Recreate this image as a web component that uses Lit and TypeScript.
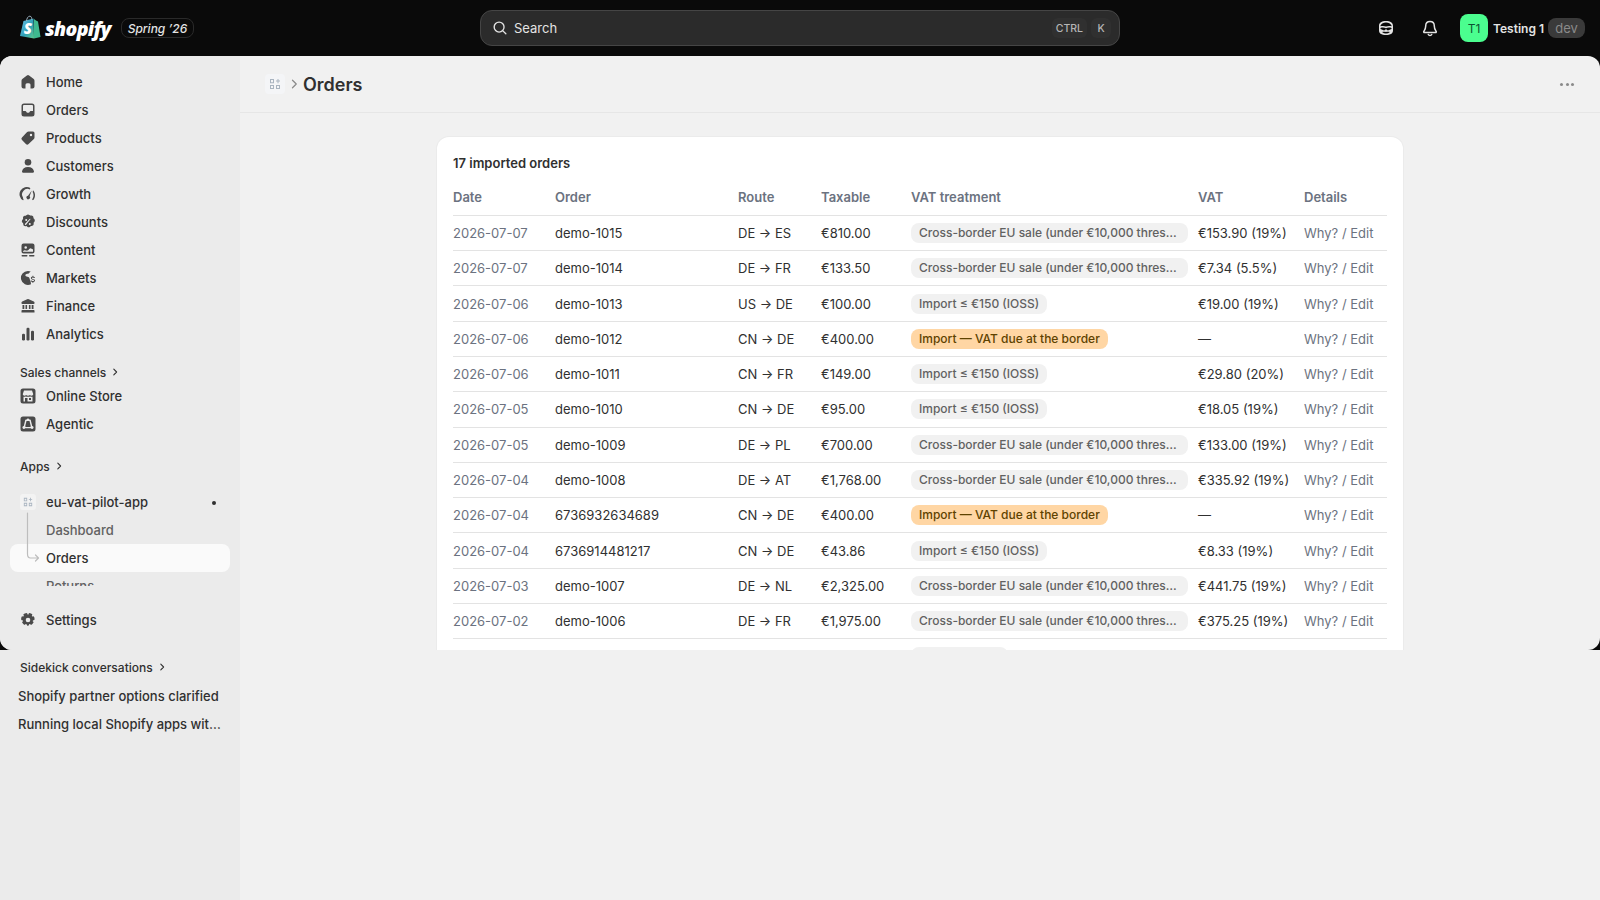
import { LitElement, html, css, svg } from "lit";
import { customElement } from "lit/decorators.js";

const ic = (body: unknown) => html`<svg class="ic" viewBox="0 0 20 20" fill="currentColor" fill-rule="evenodd">${body}</svg>`;

const ICONS: Record<string, unknown> = {
  home: svg`<path d="M8.9 3.4a1.8 1.8 0 0 1 2.2 0l4.6 3.7c.5.4.8 1 .8 1.6v5.8a2 2 0 0 1-2 2h-2v-3.7a1.5 1.5 0 0 0-1.5-1.5H9a1.5 1.5 0 0 0-1.5 1.5v3.7h-2a2 2 0 0 1-2-2V8.700c0-.6.3-1.200.8-1.600z"/>`,
  orders: svg`<path d="M6 3.500h8A2.500 2.500 0 0 1 16.500 6v8a2.500 2.500 0 0 1-2.500 2.500H6A2.500 2.500 0 0 1 3.500 14V6A2.500 2.500 0 0 1 6 3.500zM6 5a1 1 0 0 0-1 1v5h2.300c.5 0 .9.300 1 .7.200.6.900 1 1.700 1s1.500-.4 1.700-1c.1-.4.5-.7 1-.7H15V6a1 1 0 0 0-1-1z"/>`,
  products: svg`<path d="M10.600 3.500h4.400A1.500 1.500 0 0 1 16.500 5v4.400c0 .6-.2 1.100-.6 1.500l-5.300 5.100a1.900 1.900 0 0 1-2.700 0L4 12.100a1.900 1.900 0 0 1 0-2.700l5.100-5.300c.4-.4.9-.6 1.500-.6zM13 8.200a1.200 1.200 0 1 0 0-2.400 1.200 1.200 0 0 0 0 2.400z"/>`,
  customers: svg`<circle cx="10" cy="6.300" r="3.300"/><path d="M10 11c-3.500 0-5.700 1.800-6 4.600-.1.700.4 1.200 1 1.200h10c.6 0 1.100-.5 1-1.200-.3-2.800-2.500-4.600-6-4.600z"/>`,
  growth: svg`<path d="M5 16.300A7 7 0 0 1 12.400 4l-.6 1.400A5.500 5.500 0 0 0 5 13.500c0 .9.300 1.800.7 2.500zM15 6.300c1.300 1.300 2 3 2 4.700 0 1.900-.5 3.900-2 5.300l-1-1c1-1 1.500-2.700 1.500-4.300 0-1-.3-2-.8-2.900zM13.800 6.600l-2.200 5.700a1.800 1.800 0 1 1-1.600-.6z"/>`,
  discounts: svg`<path d="M8.600 2.900c.8-.7 2-.7 2.800 0l.8.7 1.100-.1c1-.1 2 .7 2.100 1.700l.1 1.100.8.800c.7.800.7 2 0 2.800l-.7.800.1 1.100c.1 1-.7 2-1.700 2.100l-1.100.1-.8.800c-.8.700-2 .7-2.800 0l-.8-.7-1.100.1c-1 .1-2-.7-2.100-1.700l-.1-1.100-.8-.8c-.7-.8-.7-2 0-2.800l.7-.8-.1-1.100c-.1-1 .7-2 1.700-2.100l1.100-.1zM12.600 7.100a.7.700 0 0 0-1-.1l-4.500 4.700a.7.700 0 0 0 1 1zM8.200 8.900a1 1 0 1 0 0-2 1 1 0 0 0 0 2zM11.800 13a1 1 0 1 0 0-2 1 1 0 0 0 0 2z"/>`,
  content: svg`<path d="M5.500 3.500h9a2 2 0 0 1 2 2v6a2 2 0 0 1-2 2h-9a2 2 0 0 1-2-2v-6a2 2 0 0 1 2-2zM9 7.500a1.300 1.300 0 1 0-2.600 0 1.300 1.300 0 0 0 2.600 0zM5 11.800h10v-2.200c-1-.5-2.200-1.500-3-1.200-1.200.4-1.500 2-2.500 2.200-1.500.3-3-1.300-4.500.6z"/><rect x="3.500" y="15" width="6" height="1.500" rx=".7"/><rect x="11" y="15" width="5.500" height="1.500" rx=".7"/>`,
  markets: svg`<path d="M10 3c1 0 1.900.2 2.700.6-.9.600-1.500 1.200-2 2-.8.300-2.200.3-3 1-.6.500-.3 1.300.2 1.600 1 .6 2.100.3 3 1 .5.400.5 1 .8 1.800.2.700.5 1.700 1 2.800L13 16.300A7 7 0 1 1 10 3z"/><path d="M15.300 7.700v.9c.9.100 1.500.600 1.600 1.400h-1.100c-.1-.3-.4-.5-.9-.5-.6 0-1 .3-1 .7s.3.600 1 .7c1.400.2 2.100.7 2.100 1.700 0 .8-.6 1.400-1.700 1.500v.9h-.8v-.9c-1-.1-1.700-.7-1.800-1.600h1.100c.1.400.5.600 1.100.6s1.100-.2 1.100-.7c0-.4-.3-.6-1.100-.7-1.400-.2-2-.8-2-1.600 0-.8.600-1.400 1.600-1.500v-.9z"/>`,
  finance: svg`<path d="M9.200 3.200a2 2 0 0 1 1.600 0l5 2.200c.5.200.7.600.7 1v.900c0 .4-.3.700-.7.700H4.200a.7.700 0 0 1-.7-.7v-.9c0-.4.200-.8.700-1z"/><path d="M4.500 9h1.800v4H4.500zM7.500 9h1.600v4H7.500zM10.900 9h1.600v4h-1.600zM13.700 9h1.800v4h-1.800z"/><path d="M4.500 14h11c.6 0 1 .4 1 1v1.500h-13V15c0-.6.400-1 1-1z"/>`,
  analytics: svg`<rect x="4" y="9.800" width="3" height="6.700" rx="1.200"/><rect x="8.500" y="3.800" width="3" height="12.700" rx="1.200"/><rect x="13" y="6.800" width="3" height="9.700" rx="1.200"/>`,
  store: svg`<path d="M5 2.500h10A2.500 2.500 0 0 1 17.500 5v10a2.500 2.500 0 0 1-2.500 2.500H5A2.500 2.500 0 0 1 2.500 15V5A2.500 2.500 0 0 1 5 2.500zM6 4.500 4.800 8c0 1 .8 1.700 1.700 1.700.7 0 1.200-.3 1.600-.8.400.5 1.100.8 1.900.8s1.500-.3 1.900-.8c.4.500.9.800 1.600.8.900 0 1.700-.7 1.700-1.700L14 4.500zM5.500 10.800v4.700h9v-4.700c-.9 0-1.600-.1-2.200-.4-.7.300-1.500.4-2.300.4s-1.600-.1-2.300-.4c-.6.300-1.300.4-2.200.4zM7 12h2.500v3.500H7zM11 12h2v2h-2z"/>`,
  agentic: svg`<path d="M5 2.500h10A2.500 2.500 0 0 1 17.500 5v10a2.500 2.500 0 0 1-2.500 2.500H5A2.500 2.500 0 0 1 2.500 15V5A2.500 2.500 0 0 1 5 2.500zM10 4.500a1.500 1.500 0 0 0-1.400 1L7.300 5.700 5.800 12a1.500 1.500 0 1 0 1.400 2.300h5.600a1.500 1.500 0 1 0 1.400-2.300l-1.500-6.300-1.300-.2a1.500 1.500 0 0 0-1.400-1zM8.500 7h3l1.300 5.300-.5.800H7.700l-.5-.8z"/>`,
  settings: svg`<path d="M8.400 3c.4 0 .8.200.9.600l.2.800a5.600 5.600 0 0 1 1 0l.200-.8c.1-.4.500-.6.900-.6.900.2 1.700.5 2.400 1 .3.200.4.700.2 1.100l-.4.600c.2.300.4.500.6.800l.8-.1c.4-.1.800.1 1 .5.300.8.400 1.700.3 2.500 0 .4-.3.800-.7.800l-.8.100-.3.900.6.600c.3.300.3.700.1 1-.5.700-1.100 1.400-1.800 1.900-.3.200-.8.200-1.100-.1l-.5-.6-.9.300-.2.800c-.1.400-.4.700-.8.700H9.600c-.4 0-.7-.3-.8-.7l-.2-.8-.9-.3-.5.600c-.3.300-.8.300-1.100.1-.7-.5-1.300-1.200-1.800-1.900-.2-.3-.2-.7.100-1l.6-.6-.3-.9-.8-.1c-.4 0-.7-.4-.7-.8-.1-.8 0-1.700.3-2.500.2-.4.600-.6 1-.5l.8.100c.2-.3.400-.5.600-.8l-.4-.6c-.2-.4-.1-.9.200-1.100.7-.5 1.500-.8 2.700-1zM10 12.300a2.300 2.300 0 1 0 0-4.600 2.300 2.300 0 0 0 0 4.600z"/>`,
};

const CROSS = "Cross-border EU sale (under €10,000 threshold)";
const IOSS = "Import ≤ €150 (IOSS)";
const BORDER = "Import — VAT due at the border";
const DOM = "Domestic sale";

const ROWS: [string, string, string, string, string, string][] = [
  ["2026-07-07", "demo-1015", "DE → ES", "€810.00", CROSS, "€153.90 (19%)"],
  ["2026-07-07", "demo-1014", "DE → FR", "€133.50", CROSS, "€7.34 (5.5%)"],
  ["2026-07-06", "demo-1013", "US → DE", "€100.00", IOSS, "€19.00 (19%)"],
  ["2026-07-06", "demo-1012", "CN → DE", "€400.00", BORDER, "—"],
  ["2026-07-06", "demo-1011", "CN → FR", "€149.00", IOSS, "€29.80 (20%)"],
  ["2026-07-05", "demo-1010", "CN → DE", "€95.00", IOSS, "€18.05 (19%)"],
  ["2026-07-05", "demo-1009", "DE → PL", "€700.00", CROSS, "€133.00 (19%)"],
  ["2026-07-04", "demo-1008", "DE → AT", "€1,768.00", CROSS, "€335.92 (19%)"],
  ["2026-07-04", "6736932634689", "CN → DE", "€400.00", BORDER, "—"],
  ["2026-07-04", "6736914481217", "CN → DE", "€43.86", IOSS, "€8.33 (19%)"],
  ["2026-07-03", "demo-1007", "DE → NL", "€2,325.00", CROSS, "€441.75 (19%)"],
  ["2026-07-02", "demo-1006", "DE → FR", "€1,975.00", CROSS, "€375.25 (19%)"],
  ["2026-07-02", "demo-1005", "DE → DE", "€320.00", DOM, "€60.80 (19%)"],
  ["2026-07-01", "demo-1004", "DE → DE", "€210.00", DOM, "€39.90 (19%)"],
  ["2026-07-01", "demo-1003", "DE → IT", "€540.00", CROSS, "€102.60 (19%)"],
  ["2026-06-30", "demo-1002", "DE → FR", "€260.00", CROSS, "€49.40 (19%)"],
  ["2026-06-30", "demo-1001", "DE → DE", "€180.00", DOM, "€34.20 (19%)"],
];

const NAV: [string, string][] = [
  ["home", "Home"], ["orders", "Orders"], ["products", "Products"], ["customers", "Customers"], ["growth", "Growth"],
  ["discounts", "Discounts"], ["content", "Content"], ["markets", "Markets"], ["finance", "Finance"], ["analytics", "Analytics"],
];

const chev = html`<svg class="chev" viewBox="0 0 8 8" fill="none" stroke="currentColor" stroke-width="1.100" stroke-linecap="round" stroke-linejoin="round"><path d="M2.800 1.200 5.600 4 2.800 6.800"/></svg>`;
const appIcon = html`<svg class="appglyph" viewBox="0 0 12 12" fill="#a9b4c0"><path fill-rule="evenodd" d="M1 1h4v4.200H1zm1 1v2.200h2V2zM1 7h4v4H1zm1 1v2h2V8zM7 7h4v4H7zm1 1v2h2V8z"/><path d="M8.500 1h1v1.600H11v1H9.500v1.600h-1V3.600H7v-1h1.500z"/></svg>`;

@customElement("app-root")
export class AppRoot extends LitElement {
  static styles = css`
    :host { display: block; width: 1600px; height: 900px; overflow: hidden; background: #f1f1f1; font-family: Inter, "Liberation Sans", sans-serif; color: #303030; font-size: 13px; }
    * { box-sizing: border-box; }
    .top { height: 56px; background: #0a0a0a; display: flex; align-items: center; position: relative; padding: 0 16px 0 20px; color: #e3e3e3; }
    .brand { display: flex; align-items: center; width: 460px; flex: none; }
    .bag { width: 21px; height: 24px; flex: none; margin-top: -3px; }
    .word { font-family: "Open Sans", sans-serif; font-style: italic; font-weight: 800; font-size: 19.500px; letter-spacing: -0.700px; color: #fff; margin-left: 4px; }
    .spring { margin-left: 10px; height: 20px; padding: 0 6px; display: flex; align-items: center; border: 1px solid #2a2a2a; border-radius: 8px; font-style: italic; font-weight: 500; font-size: 12px; color: #e3e3e3; }
    .search { width: 640px; height: 36px; flex: none; background: #2b2b2b; border: 1px solid #454545; border-radius: 12px; display: flex; align-items: center; padding: 0 8px 0 10px; color: #e3e3e3; }
    .search svg { width: 18px; height: 18px; flex: none; }
    .search span.l { margin-left: 5px; font-size: 13px; flex: 1; }
    .key { height: 20px; padding: 0 4px; min-width: 20px; border-radius: 6px; background: #303030; color: #b5b5b5; font-size: 10.500px; font-weight: 500; display: flex; align-items: center; justify-content: center; margin-left: 4px; }
    .right { flex: 1; display: flex; align-items: center; height: 100%; }
    .tico { width: 20px; height: 20px; color: #e3e3e3; flex: none; }
    .t1 { margin-left: 256px; }
    .t2 { margin-left: 24px; }
    .avatar { margin-left: 20px; width: 28px; height: 28px; border-radius: 8px; background: #4bfe8f; color: #0c5132; font-size: 12px; display: flex; align-items: center; justify-content: center; flex: none; }
    .uname { margin-left: 5px; font-size: 12px; font-weight: 600; color: #e3e3e3; white-space: nowrap; }
    .dev { margin-left: 4px; height: 20px; width: 37px; flex: none; border-radius: 8px; background: #3a3a3a; color: #8a8a8a; font-size: 13px; display: flex; align-items: center; justify-content: center; }

    .framewrap { background: #0a0a0a; height: 594px; }
    .frame { height: 100%; display: flex; border-radius: 12px; overflow: hidden; background: #f1f1f1; }
    .side { width: 240px; flex: none; background: #ebebeb; display: flex; flex-direction: column; padding: 12px 10px 0; }
    .item { height: 28px; display: flex; align-items: center; padding-left: 8px; gap: 8px; font-weight: 500; border-radius: 8px; color: #303030; position: relative; flex: none; }
    .ic { width: 20px; height: 20px; color: #4a4a4a; flex: none; }
    .sec { height: 20px; display: flex; align-items: center; gap: 4px; padding-left: 10px; font-size: 12px; font-weight: 500; color: #303030; flex: none; }
    .sec .chev { width: 8px; height: 8px; margin-left: 1px; }
    .m14 { margin-top: 14px; }
    .m18 { margin-top: 18px; }
    .apps { margin-top: 12px; height: 98px; overflow: hidden; position: relative; flex: none; }
    .appbox { width: 16px; height: 16px; margin: 0 2px; border-radius: 3px; background: #f3f3f3; display: flex; align-items: center; justify-content: center; flex: none; }
    .appglyph { width: 10px; height: 10px; }
    .dot { position: absolute; left: 202px; width: 4px; height: 4px; border-radius: 50%; background: #303030; top: 13px; }
    .sub { padding-left: 36px; color: #616161; }
    .sub.sel { background: #fafafa; color: #303030; }
    .tree { position: absolute; left: 16px; top: 24px; width: 16px; height: 50px; color: #bdbdbd; }
    .settings { margin-top: 20px; }
    .lower { display: flex; height: 250px; }
    .lowside { width: 240px; background: #ebebeb; padding: 7px 10px 0; flex: none; }
    .talk { height: 28px; line-height: 28px; padding-left: 8px; width: 214px; font-weight: 500; white-space: nowrap; overflow: hidden; text-overflow: ellipsis; }
    .lowside .sec { margin-bottom: 5px; }

    .main { flex: 1; min-width: 0; display: flex; flex-direction: column; }
    .phead { height: 57px; flex: none; border-bottom: 1px solid #e6e6e6; display: flex; align-items: center; padding: 0 26px 0 25px; }
    .crumb { width: 20px; height: 20px; border-radius: 4px; background: #f4f5f7; display: flex; align-items: center; justify-content: center; }
    .crumb svg { width: 12px; height: 12px; }
    .pchev { width: 10px; height: 10px; margin: 0 4px; color: #8a8a8a; }
    .ptitle { font-size: 18px; font-weight: 600; flex: 1; }
    .more { display: flex; gap: 2.500px; }
    .more i { width: 3px; height: 3px; border-radius: 50%; background: #8a8a8a; }
    .scroll { flex: 1; overflow-y: scroll; padding: 24px 0 194px; min-height: 0; }
    .card { width: 966px; margin: 0 auto; background: #fff; border-radius: 12px; padding: 16px; box-shadow: 0 0 0 1px #ebebeb; }
    .ctitle { font-weight: 600; line-height: 20px; margin-bottom: 7px; font-size: 13px; }
    table { width: 934px; table-layout: fixed; border-collapse: collapse; }
    .c1 { width: 102px; } .c2 { width: 183px; } .c3 { width: 83px; } .c4 { width: 90px; } .c5 { width: 287px; } .c6 { width: 106px; } .c7 { width: 83px; }
    tr { height: 35.300px; }
    th, td { padding: 0; border-bottom: 1px solid #e3e3e3; text-align: left; font-size: 13px; white-space: nowrap; vertical-align: middle; }
    th { font-weight: 600; color: #6b7280; }
    .dim { color: #6b7280; }
    .pill { display: block; width: fit-content; max-width: 277px; height: 20px; line-height: 20px; padding: 0 8px; border-radius: 8px; background: #f1f1f1; color: #616161; font-size: 12px; font-weight: 500; overflow: hidden; text-overflow: ellipsis; }
    .pill.warn { background: #ffd6a4; color: #5e4200; }
  `;

  render() {
    return html`
      <div class="top">
        <div class="brand">
          <svg class="bag" viewBox="0 0 21 24">
            <defs><linearGradient id="bg" x1="0" y1="0" x2="1" y2="1"><stop offset="0" stop-color="#6fc3ea"/><stop offset=".55" stop-color="#2f9fb8"/><stop offset="1" stop-color="#5cc98a"/></linearGradient></defs>
            <path d="M3.500 6 13.500 3.500l.5 20L0 21z" fill="url(#bg)"/>
            <path d="M14 4l2 1.500 2 1 2.500 15.500-6.500 1.500z" fill="#3fb98f"/>
            <path d="M6.500 6c.2-2.500 1.500-4.800 3.300-4.800 1.600 0 2 1.800 2 3.500" fill="none" stroke="#9fb4c4" stroke-width="1"/>
            <text x="3.800" y="19" font-family="Open Sans, sans-serif" font-weight="800" font-size="15" font-style="italic" fill="#fff">S</text>
          </svg>
          <span class="word">shopify</span>
          <span class="spring">Spring ’26</span>
        </div>
        <div class="search">
          <svg viewBox="0 0 20 20" fill="none" stroke="currentColor" stroke-width="1.500" stroke-linecap="round"><circle cx="9" cy="9" r="5.500"/><path d="M13.200 13.200 16.500 16.500"/></svg>
          <span class="l">Search</span>
          <span class="key">CTRL</span><span class="key">K</span>
        </div>
        <div class="right">
          <svg class="tico t1" viewBox="0 0 20 20" fill="currentColor" fill-rule="evenodd"><path d="M10 3c4.500 0 7 1.800 7 5v4.500c0 3-2.500 4.500-7 4.500s-7-1.500-7-4.500V8c0-3.200 2.500-5 7-5zM4.500 8.300c1.700-.6 3.700-.6 5.500.3 1.800-.9 3.800-.9 5.500-.3V7.500C14.500 5.500 12.500 4.500 10 4.500S5.500 5.500 4.500 7.500zM4.500 10v1l3 1.300c1.100.4 1.900-.8 2.500-1.300.6.500 1.400 1.700 2.500 1.300l3-1.300v-1c-1.800-.7-3.900-.6-5.500.3-1.600-.9-3.700-1-5.500-.3zM6 14c1.300 1 2.600 1.500 4 1.500s2.700-.5 4-1.500c-1.300-.3-2.700-.3-4-.1-1.300-.2-2.700-.2-4 .1z"/></svg>
          <svg class="tico t2" viewBox="0 0 20 20" fill="none" stroke="currentColor" stroke-width="1.500" stroke-linejoin="round" stroke-linecap="round"><path d="M10 3.500c-2.700 0-4.300 2-4.300 4.500 0 3.500-1.700 4.800-2 5.700-.1.400.2.800.6.800h11.400c.4 0 .7-.4.600-.8-.3-.9-2-2.200-2-5.700 0-2.500-1.600-4.500-4.300-4.500z"/><path d="M8.300 16.500c.3.700 1 1 1.700 1s1.400-.3 1.700-1"/></svg>
          <div class="avatar">T1</div>
          <span class="uname">Testing 1</span>
          <span class="dev">dev</span>
        </div>
      </div>
      <div class="framewrap"><div class="frame">
        <nav class="side">
          ${NAV.map(([i, t]) => html`<div class="item">${ic(ICONS[i])}<span>${t}</span></div>`)}
          <div class="sec m14">Sales channels ${chev}</div>
          <div class="item">${ic(ICONS.store)}<span>Online Store</span></div>
          <div class="item">${ic(ICONS.agentic)}<span>Agentic</span></div>
          <div class="sec m18">Apps ${chev}</div>
          <div class="apps">
            <div class="item"><span class="appbox">${appIcon}</span><span>eu-vat-pilot-app</span><i class="dot"></i></div>
            <div class="item sub">Dashboard</div>
            <div class="item sub sel">Orders</div>
            <div class="item sub">Returns</div>
            <svg class="tree" viewBox="0 0 16 50" fill="none" stroke="currentColor" stroke-width="1.200" stroke-linecap="round" stroke-linejoin="round"><path d="M1.500 1v41c0 2 1 4 3 4h8M9.500 43l3 3-3 3"/></svg>
          </div>
          <div class="item settings">${ic(ICONS.settings)}<span>Settings</span></div>
        </nav>
        <div class="main">
          <div class="phead">
            <span class="crumb">${appIcon}</span>
            <svg class="pchev" viewBox="0 0 8 8" fill="none" stroke="currentColor" stroke-width="1" stroke-linecap="round" stroke-linejoin="round"><path d="M2.800 1 5.800 4 2.800 7"/></svg>
            <span class="ptitle">Orders</span>
            <span class="more"><i></i><i></i><i></i></span>
          </div>
          <div class="scroll">
            <div class="card">
              <div class="ctitle">17 imported orders</div>
              <table>
                <colgroup><col class="c1"/><col class="c2"/><col class="c3"/><col class="c4"/><col class="c5"/><col class="c6"/><col class="c7"/></colgroup>
                <thead><tr><th>Date</th><th>Order</th><th>Route</th><th>Taxable</th><th>VAT treatment</th><th>VAT</th><th>Details</th></tr></thead>
                <tbody>
                  ${ROWS.map((r) => html`<tr>
                    <td class="dim">${r[0]}</td><td>${r[1]}</td><td>${r[2]}</td><td>${r[3]}</td>
                    <td><span class="pill ${r[4] === BORDER ? "warn" : ""}">${r[4]}</span></td>
                    <td>${r[5]}</td><td class="dim">Why? / Edit</td>
                  </tr>`)}
                </tbody>
              </table>
            </div>
          </div>
        </div>
      </div></div>
      <div class="lower">
        <div class="lowside">
          <div class="sec">Sidekick conversations ${chev}</div>
          <div class="talk">Shopify partner options clarified</div>
          <div class="talk">Running local Shopify apps without a partner account</div>
        </div>
      </div>
    `;
  }
}
